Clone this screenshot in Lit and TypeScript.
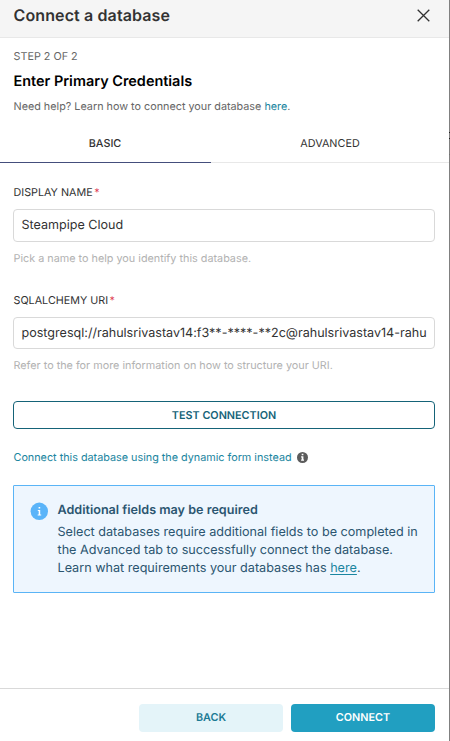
import { LitElement, html, css } from 'lit';
import { customElement } from 'lit/decorators.js';

@customElement('app-root')
export class AppRoot extends LitElement {
  static styles = css`
    :host {
      display: flex;
      height: 741px;
      overflow: hidden;
      font-family: Inter, "Liberation Sans", sans-serif;
      color: #323232;
      text-rendering: geometricPrecision;
    }
    * { box-sizing: border-box; }
    .modal {
      flex: 1;
      min-width: 0;
      height: 741px;
      display: flex;
      flex-direction: column;
      background: #fff;
    }
    /* Sliver of the dimmed page behind the dialog */
    .backdrop {
      width: 1px;
      background: linear-gradient(
        #808080 132px, #202020 132px 133px, #808080 133px 138px,
        #202020 138px 139px, #808080 139px 154px, #707070 154px 155px, #808080 155px
      );
    }
    .header {
      height: 38px;
      flex: none;
      display: flex;
      justify-content: space-between;
      padding: 5px 19px 0 13.5px;
      background: #f5f5f5;
      border-bottom: 1px solid #e8e8e8;
    }
    .title { font-size: 16px; line-height: 20px; font-weight: 600; letter-spacing: 0.12px; }
    .close { width: 13px; height: 13px; margin-top: 4px; stroke: #323232; stroke-width: 1.3; fill: none; }
    .intro { height: 86px; padding: 11px 13px 0 13.5px; white-space: nowrap; }
    .step { font-size: 10.8px; line-height: 16px; color: #666; }
    .heading { margin-top: 8px; font-size: 14.45px; line-height: 18px; font-weight: 600; color: #000; }
    .help { margin-top: 9px; font-size: 10.8px; line-height: 14px; color: #666; }
    .link { color: #1a85a0; }
    .tabs { display: grid; grid-template-columns: 211px 1fr; height: 39px; flex: none; }
    .tab {
      border-bottom: 1px solid #e8e8e8;
      padding-top: 2px;
      text-align: center;
      font-size: 10.8px;
      line-height: 36px;
    }
    .tab.active { border-color: #444e7c; font-weight: 500; padding-right: 1px; }
    .body { flex: 1; padding: 23px 14px 0 13px; display: flex; flex-direction: column; }
    .label { font-size: 10.75px; line-height: 14px; white-space: nowrap; padding-left: 0.5px; }
    .label.second { margin-top: 28px; }
    .star { color: #e04355; margin-left: 1.5px; }
    .field {
      margin-top: 9px;
      height: 33px;
      border: 1px solid #d9d9d9;
      border-radius: 4px;
      padding: 1px 7px 0 7.5px;
      font-size: 12.57px;
      line-height: 30px;
    }
    .field.short { height: 32px; line-height: 29px; }
    .value { white-space: nowrap; }
    .hint { margin-top: 10px; font-size: 10.82px; line-height: 14px; color: #b2b2b2; white-space: nowrap; padding-left: 0.5px; }
    .test {
      margin-top: 28px;
      height: 28px;
      border: 1px solid #156378;
      border-radius: 4px;
      padding-top: 1px;
      text-align: center;
      font-size: 10.8px;
      line-height: 25px;
      font-weight: 600;
      color: #156378;
    }
    .switch {
      margin-top: 21px;
      height: 15px;
      display: flex;
      align-items: center;
      gap: 5.5px;
      padding-left: 0.5px;
      font-size: 10.8px;
      line-height: 15px;
      color: #1a85a0;
      white-space: nowrap;
    }
    .small-info { width: 11px; height: 11px; flex: none; }
    .alert {
      margin-top: 20px;
      height: 108px;
      display: flex;
      gap: 9.5px;
      padding: 16px 0 0 16px;
      background: #eef6fe;
      border: 1px solid #5ab4f6;
      border-radius: 1px;
      color: #2b5570;
      white-space: nowrap;
    }
    .big-info { width: 18px; height: 18px; flex: none; }
    .alert-title { margin-top: 1px; font-size: 12.6px; line-height: 16px; font-weight: 600; }
    .alert-text { margin-top: 5px; font-size: 12.64px; line-height: 18px; }
    .alert-link { color: #1a85a0; text-decoration: underline; text-underline-offset: 2px; }
    .footer {
      flex: none;
      height: 53px;
      border-top: 1px solid #d9d9d9;
      padding: 15px 14px 0 0;
      display: flex;
      justify-content: flex-end;
      gap: 8px;
    }
    .btn {
      width: 144px;
      height: 28px;
      border-radius: 4px;
      text-align: center;
      font-size: 10.8px;
      line-height: 27px;
      font-weight: 600;
    }
    .back { background: #e4f4f9; color: #1b7a94; }
    .connect { background: #219fc1; color: #fff; }
  `;

  render() {
    return html`
      <div class="modal">
        <div class="header">
          <span class="title">Connect a database</span>
          <svg class="close" viewBox="0 0 13 13"><path d="M.7.7 12.3 12.3M12.3.7.7 12.3" /></svg>
        </div>
        <div class="intro">
          <div class="step">STEP 2 OF 2</div>
          <div class="heading">Enter Primary Credentials</div>
          <div class="help">Need help? Learn how to connect your database <span class="link">here</span>.</div>
        </div>
        <div class="tabs">
          <div class="tab active">BASIC</div>
          <div class="tab">ADVANCED</div>
        </div>
        <div class="body">
          <div class="label">DISPLAY NAME<span class="star">*</span></div>
          <div class="field"><div class="value">Steampipe Cloud</div></div>
          <div class="hint">Pick a name to help you identify this database.</div>
          <div class="label second">SQLALCHEMY URI<span class="star">*</span></div>
          <div class="field short"><div class="value">postgresql://rahulsrivastav14:f3**-****-**2c@rahulsrivastav14-rahu</div></div>
          <div class="hint">Refer to the for more information on how to structure your URI.</div>
          <div class="test">TEST CONNECTION</div>
          <div class="switch">
            <span>Connect this database using the dynamic form instead</span>
            <svg class="small-info" viewBox="0 0 11 11">
              <circle cx="5.5" cy="5.5" r="5.5" fill="#5c5c5c" />
              <path d="M4.7 1.8h1.7v1.5H4.7zM4.1 4.3h2.3v3.3H7v1.2H4.1V7.6h.6V5.5h-.6z" fill="#fff" />
            </svg>
          </div>
          <div class="alert">
            <svg class="big-info" viewBox="0 0 18 18">
              <circle cx="9.3" cy="9.3" r="8.7" fill="#5ab4f9" />
              <path d="M8.6 4.9h1.6v1.6H8.6zM7.8 7.9h2.4v4.6h1v1.1H7.7v-1.1h1V8.9h-.9z" fill="#fff" />
            </svg>
            <div>
              <div class="alert-title">Additional fields may be required</div>
              <div class="alert-text">
                <div>Select databases require additional fields to be completed in</div>
                <div>the Advanced tab to successfully connect the database.</div>
                <div>Learn what requirements your databases has <span class="alert-link">here</span>.</div>
              </div>
            </div>
          </div>
        </div>
        <div class="footer">
          <div class="btn back">BACK</div>
          <div class="btn connect">CONNECT</div>
        </div>
      </div>
      <div class="backdrop"></div>
    `;
  }
}
